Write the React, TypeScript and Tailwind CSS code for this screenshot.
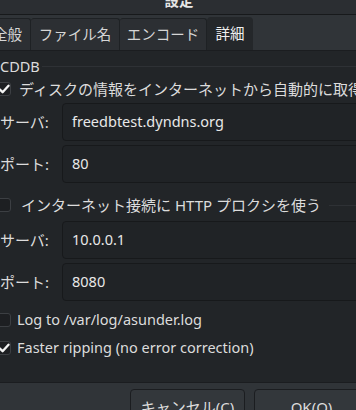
import React from "react";

const FONT = { fontFamily: '"Noto Sans", "Noto Sans CJK JP", sans-serif' };

function Check({ checked }: { checked?: boolean }) {
  return (
    <span className="w-[14px] h-[14px] shrink-0 rounded-[3px] border border-[#3c3f43] bg-[#1d1f22] flex items-center justify-center">
      {checked && (
        <svg width="12" height="12" viewBox="0 0 12 12">
          <path d="M1.6 6.3 L4.6 9.2 L10.5 2.7" fill="none" stroke="#f4f4f4" strokeWidth="2.3" strokeLinecap="round" strokeLinejoin="round" />
        </svg>
      )}
    </span>
  );
}

function Field({ label, value, className }: { label: string; value: string; className: string }) {
  return (
    <div className={`flex items-center ${className}`}>
      <span className="w-[62px] shrink-0 text-[15px] text-[#dcdcdc]">{label}</span>
      <div className="h-full w-[320px] shrink-0 rounded-[4px] border border-[#17191b] bg-[#202326] flex items-center pl-[9px] text-[#e8e8e8]">
        {value}
      </div>
    </div>
  );
}

export default function App() {
  return (
    <div className="w-[356px] h-[410px] overflow-hidden bg-[#222528] flex flex-col text-[14.5px]" style={FONT}>
      {/* title */}
      <div className="h-[15px] shrink-0 bg-[#2b2e32] border-b border-[#17191b] overflow-hidden flex justify-center">
        <span className="font-bold text-[#e6e6e6] leading-[20px] mt-[-10px] ml-[2px]">設定</span>
      </div>

      {/* tabs */}
      <div className="h-[36px] shrink-0 bg-[#303438] border-b border-[#1b1d20] flex items-end ml-[-16px] text-[#d6d6d6]">
        <div className="w-[47px] h-[32px] shrink-0 flex items-center justify-center border-x border-t border-[#1e2124] rounded-t-[3px] bg-[#2c2f33]">全般</div>
        <div className="w-[89px] h-[32px] shrink-0 flex items-center justify-center border-r border-t border-[#1e2124] rounded-t-[3px] bg-[#2c2f33]">ファイル名</div>
        <div className="w-[87px] h-[32px] shrink-0 flex items-center justify-center border-r border-t border-[#1e2124] rounded-t-[3px] bg-[#2c2f33]">エンコード</div>
        <div className="w-[46px] h-[33px] shrink-0 flex items-center justify-center rounded-t-[4px] bg-[#24272a] text-[#f0f0f0]">詳細</div>
      </div>

      {/* content */}
      <div className="flex-1 flex flex-col text-[#dcdcdc]">
        <div className="mt-[5px] h-[21px] flex items-center">
          <span>CDDB</span>
          <div className="flex-1 h-px bg-[#2e3135] ml-[2px]" />
        </div>
        <div className="mt-[1px] h-[22px] flex items-center gap-[8px] ml-[-3px]">
          <Check checked />
          <span className="whitespace-nowrap text-[15px]">ディスクの情報をインターネットから自動的に取得</span>
        </div>
        <Field className="mt-[3px] h-[38px]" label="サーバ:" value="freedbtest.dyndns.org" />
        <Field className="mt-[4px] h-[38px]" label="ポート:" value="80" />

        <div className="mt-[11px] h-[22px] flex items-center gap-[10px] ml-[-3px]">
          <Check />
          <span className="whitespace-nowrap text-[15px]">インターネット接続に HTTP プロクシを使う</span>
          <div className="flex-1 h-px bg-[#2e3135] ml-[-2px]" />
        </div>
        <Field className="mt-[5px] h-[38px]" label="サーバ:" value="10.0.0.1" />
        <Field className="mt-[4px] h-[38px]" label="ポート:" value="8080" />

        <div className="mt-[8px] h-[22px] flex items-center gap-[6px] ml-[-3px]">
          <Check />
          <span>Log to /var/log/asunder.log</span>
        </div>
        <div className="mt-[6px] h-[22px] flex items-center gap-[6px] ml-[-3px]">
          <Check checked />
          <span>Faster ripping (no error correction)</span>
        </div>
      </div>

      {/* actions */}
      <div className="h-[28px] shrink-0 bg-[#303438] border-t border-[#1b1d20] flex items-start pt-[6px] pl-[130px] gap-[9px]">
        <div className="w-[115px] h-[36px] shrink-0 rounded-[4px] border border-[#1b1d20] bg-[#33373b] flex items-center justify-center text-[15px] text-[#dcdcdc]">キャンセル(C)</div>
        <div className="w-[115px] h-[36px] shrink-0 rounded-[4px] border border-[#1b1d20] bg-[#33373b] flex items-center justify-center text-[15px] text-[#dcdcdc]">OK(O)</div>
      </div>
    </div>
  );
}
